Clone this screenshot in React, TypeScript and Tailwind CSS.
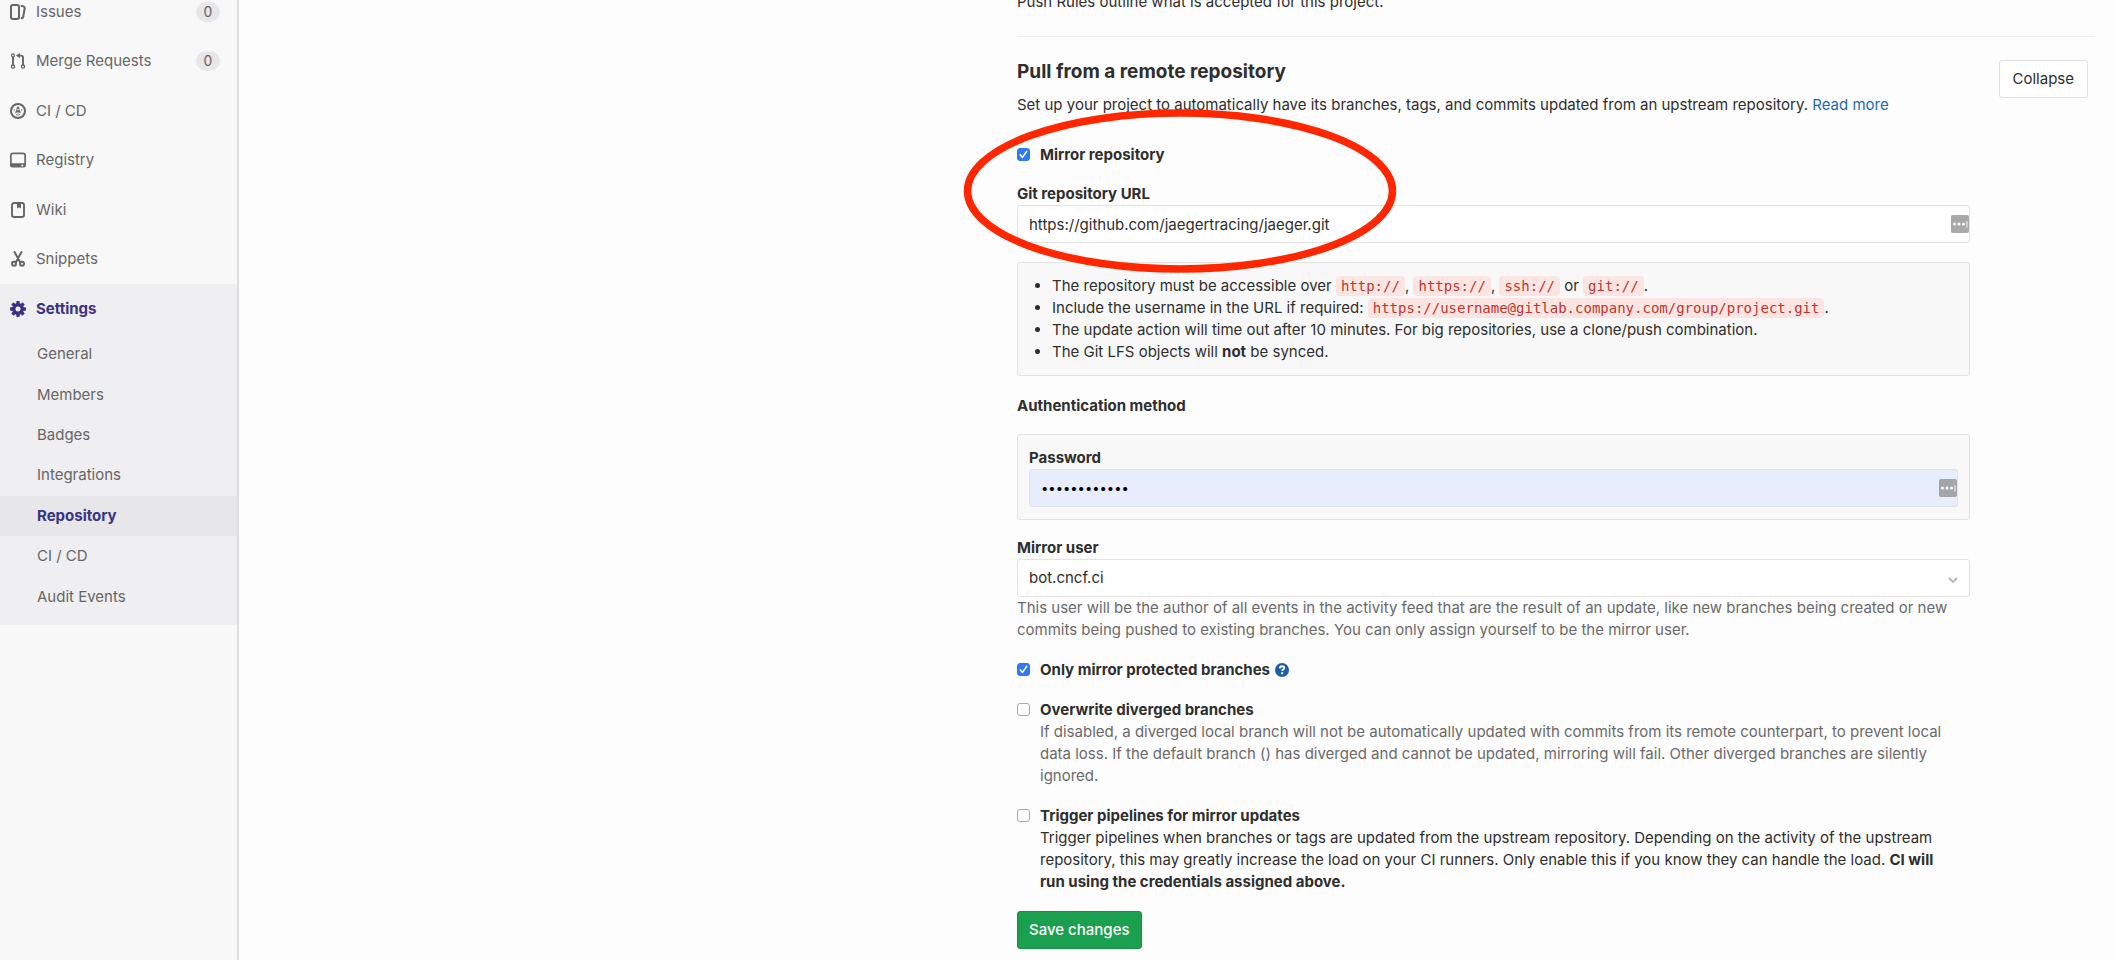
import type { ReactNode } from "react";

function Glyph({ children }: { children: ReactNode }) {
  return (
    <svg viewBox="0 0 16 16" className="size-4 shrink-0" fill="currentColor" aria-hidden="true">
      {children}
    </svg>
  );
}

const IssuesIcon = () => (
  <Glyph>
    <path
      fillRule="evenodd"
      d="M10.458 15.012l.311.055a3 3 0 0 0 3.476-2.433l1.389-7.879A3 3 0 0 0 13.2 1.28L11.23.933a3.002 3.002 0 0 0-.824-.031c.364.59.58 1.28.593 2.02l1.854.328a1 1 0 0 1 .811 1.158l-1.389 7.879a1 1 0 0 1-1.158.81l-.118-.02a3.98 3.98 0 0 1-.541 1.935zM3 0h4a3 3 0 0 1 3 3v10a3 3 0 0 1-3 3H3a3 3 0 0 1-3-3V3a3 3 0 0 1 3-3zm0 2a1 1 0 0 0-1 1v10a1 1 0 0 0 1 1h4a1 1 0 0 0 1-1V3a1 1 0 0 0-1-1H3z"
    />
  </Glyph>
);

const MergeIcon = () => (
  <Glyph>
    <g fill="none" stroke="currentColor">
      <circle cx="3" cy="2.4" r="1.5" strokeWidth="1.2" />
      <circle cx="3" cy="13.6" r="1.6" strokeWidth="1.3" />
      <circle cx="13" cy="13.6" r="1.6" strokeWidth="1.3" />
      <path d="M3 4v8M8.5 2.6H11a2 2 0 0 1 2 2V12" strokeWidth="1.9" />
    </g>
    <path d="M9.8 0v5.2L6 2.6z" />
  </Glyph>
);

const PipelineIcon = () => (
  <Glyph>
    <circle cx="8" cy="8" r="7" fill="none" stroke="currentColor" strokeWidth="2" />
    <path d="M8 3.2c1.3 1.1 1.7 2.4 1.5 3.900l1 1.500c.3.5.2 1.300-.1 1.900l-1.100-.9H6.700l-1.100.9c-.3-.6-.4-1.400-.1-1.900l1-1.500C6.300 5.600 6.700 4.300 8 3.200z" />
    <circle cx="8" cy="6.600" r=".8" fill="#f7f7f7" />
    <path d="M4.300 6.200v1.600M11.700 6.200v1.600M8 10.400v2.400M6.500 11.200v1M9.500 11.200v1" stroke="currentColor" strokeWidth=".9" />
  </Glyph>
);

const RegistryIcon = () => (
  <Glyph>
    <path
      fillRule="evenodd"
      d="M3 .5h10a3 3 0 0 1 3 3v9.500a2.500 2.500 0 0 1-2.500 2.500h-11A2.500 2.500 0 0 1 0 13V3.500a3 3 0 0 1 3-3zm0 1.700a1.300 1.300 0 0 0-1.300 1.300v7.700h12.600V3.500A1.300 1.300 0 0 0 13 2.200H3zm9.300 10.200a1 1 0 1 0 0 2 1 1 0 0 0 0-2z"
    />
  </Glyph>
);

const WikiIcon = () => (
  <Glyph>
    <rect x="2" y="1" width="12" height="14" rx="2" fill="none" stroke="currentColor" strokeWidth="1.900" />
    <path d="M7 1.500h4v5L9 5.200 7 6.500z" />
  </Glyph>
);

const SnippetsIcon = () => (
  <Glyph>
    <g fill="none" stroke="currentColor">
      <circle cx="4" cy="12.800" r="2" strokeWidth="2" />
      <circle cx="12" cy="12.800" r="2" strokeWidth="2" />
      <path d="M4.500 1l5.800 10.400M11.500 1L5.700 11.400" strokeWidth="2" strokeLinecap="round" />
    </g>
  </Glyph>
);

const GEAR_ANGLES = [0, 45, 90, 135];

const SettingsIcon = () => (
  <Glyph>
    <circle cx="8" cy="8" r="4.200" fill="none" stroke="currentColor" strokeWidth="3.400" />
    {GEAR_ANGLES.map((angle) => (
      <g key={angle} transform={`rotate(${angle} 8 8)`}>
        <rect x="6.300" y="0" width="3.400" height="4" rx=".7" />
        <rect x="6.300" y="12" width="3.400" height="4" rx=".7" />
      </g>
    ))}
  </Glyph>
);

const NAV_ITEMS = [
  { label: "Issues", Icon: IssuesIcon, count: "0" },
  { label: "Merge Requests", Icon: MergeIcon, count: "0" },
  { label: "CI / CD", Icon: PipelineIcon },
  { label: "Registry", Icon: RegistryIcon },
  { label: "Wiki", Icon: WikiIcon },
  { label: "Snippets", Icon: SnippetsIcon },
];

const SETTINGS_ITEMS = ["General", "Members", "Badges", "Integrations", "Repository", "CI / CD", "Audit Events"];

function Sidebar() {
  return (
    <aside className="w-[239px] shrink-0 border-r-2 border-[#dedee0] bg-[#f8f8f8] text-[#666]">
      <nav className="-mt-[13px]" aria-label="Project">
        <ul className="grid h-[297px] auto-rows-fr">
          {NAV_ITEMS.map(({ label, Icon, count }) => (
            <li key={label} className="grid">
              <a href="#" className="flex items-center gap-2.5 pr-[17px] pl-2.5">
                <Icon />
                <span className="grow">{label}</span>
                {count && (
                  <span className="flex h-5 w-6 items-center justify-center rounded-full bg-[#e7e7e9] text-sm">
                    {count}
                  </span>
                )}
              </a>
            </li>
          ))}
        </ul>
        <div className="bg-[#efeff1] pb-2">
          <a href="#" className="flex h-[50px] items-center gap-2.5 pl-2.5 font-bold text-[#393382]">
            <SettingsIcon />
            Settings
          </a>
          <ul className="grid h-[283px] auto-rows-fr">
            {SETTINGS_ITEMS.map((label) => (
              <li key={label} className="grid">
                <a
                  href="#"
                  className={
                    label === "Repository"
                      ? "flex items-center bg-[#e7e7e9] pl-[37px] font-bold text-[#393382]"
                      : "flex items-center pl-[37px]"
                  }
                >
                  {label}
                </a>
              </li>
            ))}
          </ul>
        </div>
      </nav>
    </aside>
  );
}

function Code({ children }: { children: ReactNode }) {
  return (
    <code className="rounded bg-[#fbe5e3] px-[5px] py-0.5 font-['DejaVu_Sans_Mono',monospace] text-sm leading-4 text-[#c0352b]">
      {children}
    </code>
  );
}

function AutofillBadge() {
  return (
    <svg viewBox="0 0 18 18" className="size-[18px]" aria-hidden="true">
      <rect width="18" height="18" rx="2" fill="#8c8c8c" fillOpacity=".75" />
      <circle cx="3.500" cy="9" r="1.500" fill="#fff" />
      <circle cx="8" cy="9" r="1.500" fill="#fff" />
      <circle cx="12.500" cy="9" r="1.500" fill="#fff" />
      <path d="M16 6v6.500" stroke="#fff" strokeWidth=".9" />
    </svg>
  );
}

function HelpIcon() {
  return (
    <svg viewBox="0 0 14 14" className="size-3.5" aria-hidden="true">
      <circle cx="7" cy="7" r="7" fill="#1b5fac" />
      <path d="M4.800 5.400C4.900 3.900 5.800 3.200 7.100 3.200c1.200 0 2.100.7 2.100 1.800 0 1.600-2 1.600-2 3.100" fill="none" stroke="#fff" strokeWidth="1.900" />
      <rect x="6.200" y="9.200" width="2" height="2" fill="#fff" />
    </svg>
  );
}

interface OptionProps {
  id: string;
  label: string;
  checked?: boolean;
  help?: boolean;
  children?: ReactNode;
}

function Option({ id, label, checked = false, help = false, children }: OptionProps) {
  return (
    <div className="grid grid-cols-[13px_1fr] gap-x-2.5">
      <span className="relative mt-1 size-[13px]">
        <input
          id={id}
          type="checkbox"
          defaultChecked={checked}
          className="peer block size-[13px] appearance-none rounded-[3px] border border-[#a9a9a9] bg-white checked:border-[#2f78f6] checked:bg-[#2f78f6]"
        />
        <svg viewBox="0 0 13 13" className="pointer-events-none absolute inset-0 hidden size-[13px] peer-checked:block" aria-hidden="true">
          <path d="M3.300 6.900l2.200 2.500 4.200-6" fill="none" stroke="#fff" strokeWidth="1.600" strokeLinecap="round" strokeLinejoin="round" />
        </svg>
      </span>
      <div>
        <div className="flex items-center gap-[5px]">
          <label htmlFor={id} className="font-bold">
            {label}
          </label>
          {help && (
            <a href="#" aria-label="Help">
              <HelpIcon />
            </a>
          )}
        </div>
        {children}
      </div>
    </div>
  );
}

function MirrorForm() {
  return (
    <form className="mt-7 pr-[125px]" onSubmit={(e) => e.preventDefault()}>
      <div className="relative">
        <Option id="mirror" label="Mirror repository" checked />
        <label htmlFor="url" className="mt-[17px] block font-bold">
          Git repository URL
        </label>
        <div className="relative">
          <input
            id="url"
            type="text"
            defaultValue="https://github.com/jaegertracing/jaeger.git"
            className="block h-[38px] w-full rounded-[3px] border border-[#e3e3e3] bg-white px-[11px]"
          />
          <span className="absolute top-2.5 right-px">
            <AutofillBadge />
          </span>
        </div>
        <svg
          viewBox="0 0 434 164"
          className="pointer-events-none absolute -top-[35px] -left-[54px] z-10 h-[164px] w-[434px]"
          aria-hidden="true"
        >
          <ellipse cx="217" cy="82" rx="212.500" ry="78" fill="none" stroke="#ff2600" strokeWidth="7.500" />
        </svg>
      </div>

      <ul className="mt-[19px] list-disc rounded-[3px] border border-[#e3e3e3] bg-[#f8f8f8] pt-3 pb-3 pl-[34px]">
        <li>
          The repository must be accessible over <Code>http://</Code>, <Code>https://</Code>, <Code>ssh://</Code> or{" "}
          <Code>git://</Code>.
        </li>
        <li>
          Include the username in the URL if required:{" "}
          <Code>https://username@gitlab.company.com/group/project.git</Code>.
        </li>
        <li>The update action will time out after 10 minutes. For big repositories, use a clone/push combination.</li>
        <li>
          The Git LFS objects will <strong className="font-bold">not</strong> be synced.
        </li>
      </ul>

      <p className="mt-[19px] font-bold">Authentication method</p>
      <div className="mt-[17px] rounded-[3px] border border-[#e3e3e3] bg-[#f8f8f8] px-[11px] py-3">
        <label htmlFor="password" className="block font-bold">
          Password
        </label>
        <div className="relative">
          <input
            id="password"
            type="password"
            defaultValue="mirrorsecret"
            className="block h-[38px] w-full rounded-[3px] border border-[#e0e2ea] bg-[#e7edfd] px-[11px] text-[13px] text-black"
          />
          <span className="absolute top-2.5 right-px">
            <AutofillBadge />
          </span>
        </div>
      </div>

      <label htmlFor="user" className="mt-[17px] block font-bold">
        Mirror user
      </label>
      <div className="relative">
        <select
          id="user"
          className="block h-[38px] w-full appearance-none rounded-[3px] border border-[#e3e3e3] bg-white px-[11px]"
        >
          <option>bot.cncf.ci</option>
        </select>
        <svg viewBox="0 0 10 6" className="pointer-events-none absolute top-[18px] right-3 h-1.5 w-2.5" aria-hidden="true">
          <path d="M1 1l4 4 4-4" fill="none" stroke="#b5b5b5" strokeWidth="1.800" />
        </svg>
      </div>
      <p className="text-[#6a6a6a]">
        This user will be the author of all events in the activity feed that are the result of an update, like new
        branches being created or new commits being pushed to existing branches. You can only assign yourself to be the
        mirror user.
      </p>

      <div className="mt-[18px] flex flex-col gap-[18px]">
        <Option id="protected" label="Only mirror protected branches" checked help />
        <Option id="overwrite" label="Overwrite diverged branches">
          <p className="text-[#6a6a6a]">
            If disabled, a diverged local branch will not be automatically updated with commits from its remote
            counterpart, to prevent local data loss. If the default branch () has diverged and cannot be updated,
            mirroring will fail. Other diverged branches are silently ignored.
          </p>
        </Option>
        <Option id="trigger" label="Trigger pipelines for mirror updates">
          <p className="pr-3">
            Trigger pipelines when branches or tags are updated from the upstream repository. Depending on the activity
            of the upstream repository, this may greatly increase the load on your CI runners. Only enable this if you
            know they can handle the load. <strong className="font-bold">CI will run using the credentials assigned above.</strong>
          </p>
        </Option>
      </div>

      <button
        type="submit"
        className="mt-[18px] h-[38px] rounded-[3px] border border-[#168f48] bg-[#1aa04f] px-[11px] font-medium text-white"
      >
        Save changes
      </button>
    </form>
  );
}

export default function App() {
  return (
    <div className="flex min-h-screen overflow-hidden bg-[#fdfdfd] font-['Inter',sans-serif] text-[15px] leading-[22px] text-[#2e2e2e]">
      <Sidebar />
      <main className="grid grow grid-cols-[778fr_1078fr] pr-[21px]">
        <div className="col-start-2 -mt-[9px] min-w-0">
          <p>Push Rules outline what is accepted for this project.</p>
          <section className="mt-[23px] border-t border-[#eee] pt-[23px] pb-2.5">
            <header className="flex items-start justify-between pr-[7px]">
              <div>
                <h2 className="text-[19px] leading-6 font-bold">Pull from a remote repository</h2>
                <p className="mt-2.5">
                  Set up your project to automatically have its branches, tags, and commits updated from an upstream
                  repository.{" "}
                  <a href="#" className="text-[#1b69b6]">
                    Read more
                  </a>
                </p>
              </div>
              <button type="button" className="h-[38px] rounded-[3px] border border-[#e0e0e0] bg-white px-[13px]">
                Collapse
              </button>
            </header>
            <MirrorForm />
          </section>
        </div>
      </main>
    </div>
  );
}
